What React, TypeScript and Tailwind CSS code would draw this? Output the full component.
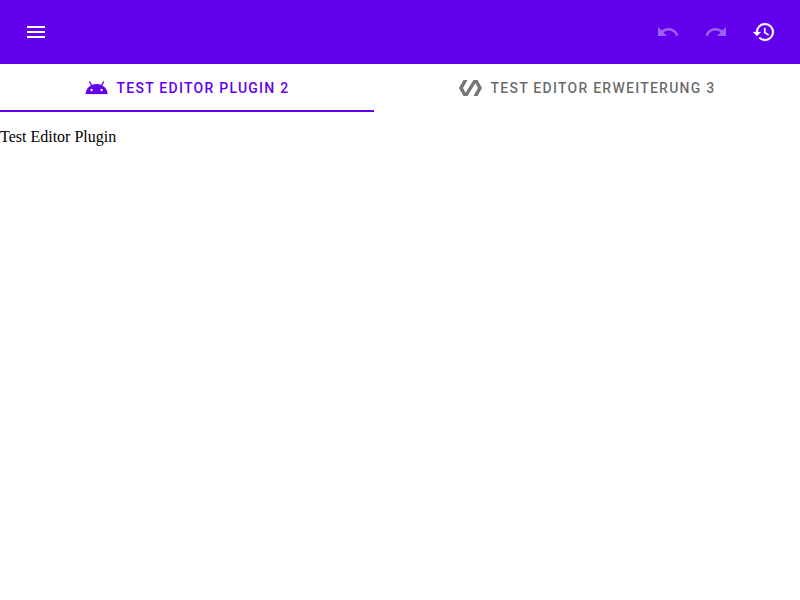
import React from "react";
import {
  MdMenu,
  MdUndo,
  MdRedo,
  MdHistory,
  MdAndroid,
  MdPolymer,
} from "react-icons/md";

function AppBar() {
  return (
    <header className="flex h-16 items-center justify-between bg-[#6200ee] px-3 text-white">
      <button className="flex size-12 items-center justify-center">
        <MdMenu className="size-6" />
      </button>
      <div className="flex">
        <button className="flex size-12 items-center justify-center text-white/38" disabled>
          <MdUndo className="size-6" />
        </button>
        <button className="flex size-12 items-center justify-center text-white/38" disabled>
          <MdRedo className="size-6" />
        </button>
        <button className="flex size-12 items-center justify-center">
          <MdHistory className="size-6 stroke-[0.2] [&>path[fill=none]]:stroke-none" />
        </button>
      </div>
    </header>
  );
}

const tabBase =
  "flex h-12 flex-auto items-center justify-center gap-2 border-b-2 px-6 pt-0.5 font-[Roboto,sans-serif] text-sm font-medium tracking-[1.25px] whitespace-nowrap uppercase antialiased";

export default function App() {
  return (
    <div className="min-h-screen bg-white">
      <AppBar />
      <nav className="flex">
        <button className={`${tabBase} border-[#6200ee] text-[#6200ee]`}>
          <MdAndroid className="size-6 -translate-x-[0.4px] stroke-[0.15] [&>path[fill=none]]:stroke-none" />
          Test Editor Plugin 2
        </button>
        <button className={`${tabBase} border-transparent text-black/60`}>
          <MdPolymer className="size-6 translate-x-[0.5px] text-black/54" />
          Test Editor Erweiterung 3
        </button>
      </nav>
      <main className="pt-4 font-['Liberation_Serif',serif] text-base leading-[18px] text-black">
        Test Editor Plugin
      </main>
    </div>
  );
}
